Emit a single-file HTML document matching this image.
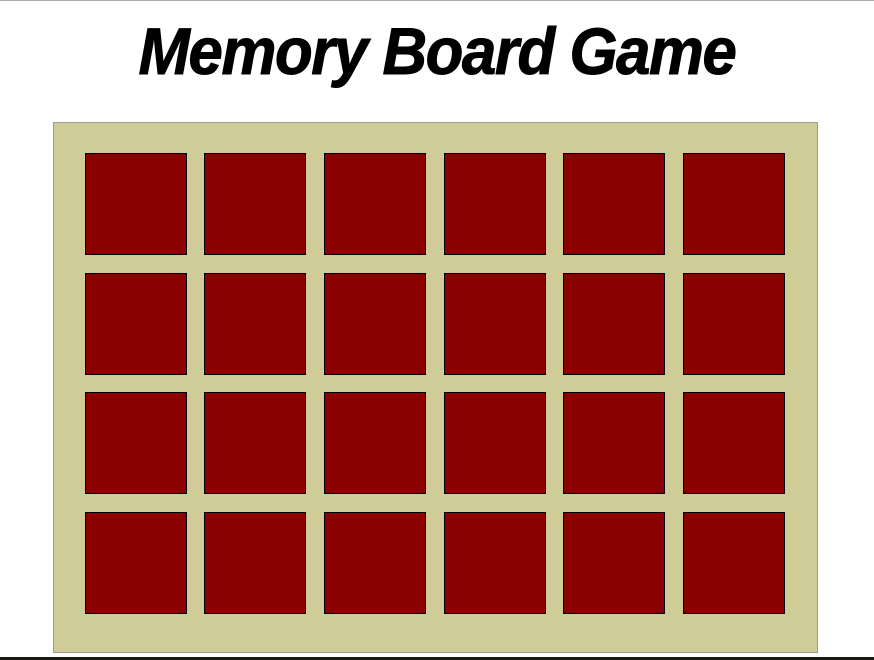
<!DOCTYPE html>
<html><head><style>
html,body{margin:0;padding:0;background:#fff;width:874px;height:660px;overflow:hidden;position:relative}
.top{position:absolute;left:0;top:0;width:874px;height:1px;background:#aaa}
.bot{position:absolute;left:0;top:657px;width:874px;height:3px;background:#1a1a14}
h1{position:absolute;left:0;top:16px;width:874px;margin:0;text-align:center;font:italic bold 66px/70px "Liberation Sans",sans-serif;letter-spacing:-1.5px;color:#000;transform:scaleX(0.935);-webkit-text-stroke:1px #000}
.board{position:absolute;left:53px;top:122px;width:763px;height:529px;background:#cfcc97;border:1px solid #9c9c90}
.c{position:absolute;width:100px;height:100px;background:#8b0000;border:1px solid #000}
</style></head><body>
<div class="top"></div>
<h1>Memory Board Game</h1>
<div class="board">
<div class="c" style="left:31px;top:30px"></div><div class="c" style="left:150px;top:30px"></div><div class="c" style="left:270px;top:30px"></div><div class="c" style="left:390px;top:30px"></div><div class="c" style="left:509px;top:30px"></div><div class="c" style="left:629px;top:30px"></div>
<div class="c" style="left:31px;top:150px"></div><div class="c" style="left:150px;top:150px"></div><div class="c" style="left:270px;top:150px"></div><div class="c" style="left:390px;top:150px"></div><div class="c" style="left:509px;top:150px"></div><div class="c" style="left:629px;top:150px"></div>
<div class="c" style="left:31px;top:269px"></div><div class="c" style="left:150px;top:269px"></div><div class="c" style="left:270px;top:269px"></div><div class="c" style="left:390px;top:269px"></div><div class="c" style="left:509px;top:269px"></div><div class="c" style="left:629px;top:269px"></div>
<div class="c" style="left:31px;top:389px"></div><div class="c" style="left:150px;top:389px"></div><div class="c" style="left:270px;top:389px"></div><div class="c" style="left:390px;top:389px"></div><div class="c" style="left:509px;top:389px"></div><div class="c" style="left:629px;top:389px"></div>
</div>
<div class="bot"></div>
</body></html>
